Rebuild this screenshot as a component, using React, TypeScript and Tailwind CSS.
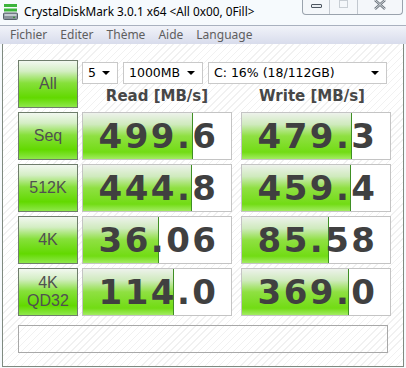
import React from "react";

type Row = { label: string[]; read: string; readBar: number; write: string; writeBar: number };

const rows: Row[] = [
  { label: ["Seq"], read: "499.6", readBar: 110, write: "479.3", writeBar: 110 },
  { label: ["512K"], read: "444.8", readBar: 109, write: "459.4", writeBar: 109 },
  { label: ["4K"], read: "36.06", readBar: 76, write: "85.58", writeBar: 87 },
  { label: ["4K", "QD32"], read: "114.0", readBar: 91, write: "369.0", writeBar: 107 },
];

const hatch =
  "bg-[repeating-linear-gradient(135deg,#f1f1f1_0px,#f1f1f1_1px,#ffffff_1px,#ffffff_5px)]";

function GreenButton({ lines }: { lines: string[] }) {
  return (
    <div className="flex h-[48px] w-[60px] flex-col items-center justify-center border border-[#6f7d6c] bg-[linear-gradient(to_bottom,#f2f8f0_0%,#d4eec4_22%,#86e03a_48%,#62d900_80%,#8ee84a_100%)] font-['Liberation_Sans',sans-serif] text-[16px] leading-[18px] text-[#505050]">
      {lines.map((l) => (
        <span key={l}>{l}</span>
      ))}
    </div>
  );
}

function ValueBox({ value, bar }: { value: string; bar: number }) {
  return (
    <div className="relative h-[48px] w-[150px] border border-[#c4c4c4] bg-white">
      <div
        className="absolute inset-y-0 left-0 border-r border-[#3f8f24] bg-[linear-gradient(to_bottom,#edf2eb_0%,#cfeabd_25%,#8fe042_50%,#72dc14_85%,#a2ec62_100%)]"
        style={{ width: bar }}
      />
      <div className="relative flex h-full items-center justify-center pl-[3px] font-['DejaVu_Sans',sans-serif] text-[34px] font-bold tracking-[2.5px] text-[#404040]">
        {value}
      </div>
    </div>
  );
}

function Select({ text, width }: { text: string; width: string }) {
  return (
    <div
      className={`flex h-[22px] ${width} items-center justify-between border border-[#c9c9c9] bg-white pl-[5px] pr-[7px] font-['DejaVu_Sans',sans-serif] text-[12.5px] text-black`}
    >
      <span>{text}</span>
      <span className="h-0 w-0 border-x-[4px] border-t-[4px] border-x-transparent border-t-black" />
    </div>
  );
}

function AppIcon() {
  return (
    <svg width="15" height="16" viewBox="0 0 15 16">
      <rect x="1" y="0" width="13" height="3" fill="#3cb43c" />
      <rect x="1" y="4.5" width="13" height="3" fill="#3cb43c" />
      <rect x="0.5" y="9" width="14" height="6.5" rx="1" fill="#8a949c" stroke="#56606a" />
      <rect x="1.5" y="10" width="12" height="2" fill="#c4ccd2" />
      <circle cx="11" cy="13.3" r="0.9" fill="#2e8a2e" />
    </svg>
  );
}

export default function App() {
  return (
    <div className="flex h-[368px] w-[406px] flex-col overflow-hidden bg-[#f6fafd] font-['Noto_Sans',sans-serif]">
      <div className="flex h-[25px] shrink-0 items-start">
        <div className="ml-[3px] mt-[4px]">
          <AppIcon />
        </div>
        <span className="ml-[6px] mt-[3px] text-[11.8px] leading-[16px] text-black">
          CrystalDiskMark 3.0.1 x64 &lt;All 0x00, 0Fill&gt;
        </span>
        <div className="ml-auto mr-[3px] flex h-[15px] w-[101px] rounded-b-[4px] border border-t-0 border-[#9aa3ad] bg-[#f4f7fa]">
          <div className="flex w-[27px] items-center justify-center border-r border-[#c2c8cf]">
            <span className="mb-[2px] h-[4px] w-[11px] rounded-[1px] border border-[#4d5660] bg-[#e9edf1]" />
          </div>
          <div className="flex w-[28px] items-start justify-center border-r border-[#c2c8cf]">
            <span className="h-[8px] w-[9px] border border-[#c8ced4]" />
          </div>
          <div className="flex flex-1 items-start justify-center">
            <svg width="12" height="10" viewBox="0 0 12 10">
              <path d="M1 0 L11 9 M11 0 L1 9" stroke="#707880" strokeWidth="2.4" />
              <path d="M1 0 L11 9 M11 0 L1 9" stroke="#e8ecf0" strokeWidth="0.8" />
            </svg>
          </div>
        </div>
      </div>
      <div className="flex h-[19px] shrink-0 items-center gap-[13px] border-t border-[#a9b1bf] bg-[linear-gradient(to_bottom,#f1f3f9,#d8dcec)] pl-[10px] text-[12px] text-[#5e5e5e]">
        <span>Fichier</span>
        <span>Editer</span>
        <span>Thème</span>
        <span>Aide</span>
        <span>Language</span>
      </div>
      <div className={`ml-[2px] mr-[2px] mb-[1px] flex flex-1 flex-col border-x border-b border-[#7f8a80] pl-[15px] pt-[16px] ${hatch}`}>
        <div className="flex gap-[4px]">
          <GreenButton lines={["All"]} />
          <div className="flex flex-col">
            <div className="mt-[2px] flex gap-[5px]">
              <Select text="5" width="w-[36px]" />
              <Select text="1000MB" width="w-[80px]" />
              <Select text="C: 16% (18/112GB)" width="w-[179px]" />
            </div>
            <div className="flex h-[24px] gap-[5px] font-['DejaVu_Sans',sans-serif] text-[15px] font-bold text-[#474747]">
              <span className="flex w-[150px] items-center justify-center">Read [MB/s]</span>
              <span className="flex w-[150px] items-center justify-center">Write [MB/s]</span>
            </div>
          </div>
        </div>
        <div className="mt-[4px] flex flex-col gap-[4px]">
          {rows.map((r) => (
            <div key={r.label.join("")} className="flex gap-[4px]">
              <GreenButton lines={r.label} />
              <ValueBox value={r.read} bar={r.readBar} />
              <div className="w-[1px]" />
              <ValueBox value={r.write} bar={r.writeBar} />
            </div>
          ))}
        </div>
        <div className="mt-[9px] h-[28px] w-[370px] border border-[#a8a8a8]" />
      </div>
    </div>
  );
}
